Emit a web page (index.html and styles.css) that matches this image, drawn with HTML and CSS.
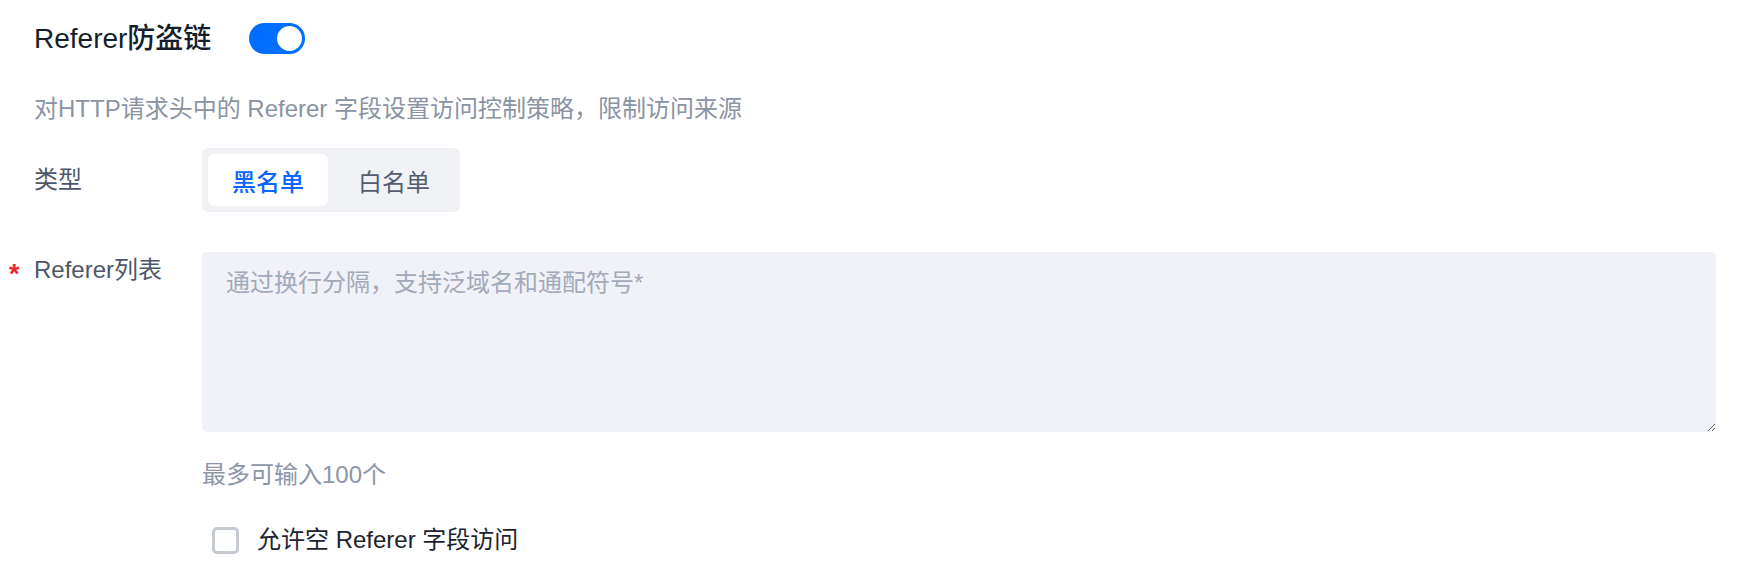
FILE: index.html
```html
<!DOCTYPE html>
<html lang="zh-CN">
<head>
  <meta charset="UTF-8">
  <title>Referer防盗链</title>
  <link rel="stylesheet" href="styles.css">
</head>
<body>

  <div class="panel">
    <div class="panel-head">
      <h2 class="panel-title">Referer防盗链</h2>
      <span class="switch is-on"><span class="switch-knob"></span></span>
    </div>

    <p class="panel-desc">对HTTP请求头中的 Referer 字段设置访问控制策略，限制访问来源</p>

    <div class="form-row row-type">
      <label class="form-label">类型</label>
      <div class="form-control">
        <div class="segment">
          <button class="segment-item is-active">黑名单</button>
          <button class="segment-item">白名单</button>
        </div>
      </div>
    </div>

    <div class="form-row row-list">
      <label class="form-label is-required">Referer列表</label>
      <div class="form-control">
        <textarea class="list-input" placeholder="通过换行分隔，支持泛域名和通配符号*"></textarea>
        <div class="form-hint">最多可输入100个</div>
        <label class="check">
          <span class="check-box"></span>
          <span class="check-text">允许空 Referer 字段访问</span>
        </label>
      </div>
    </div>
  </div>

</body>
</html>
```

FILE: styles.css
```css
body {
margin: 0;
background: #fff;
font-family: "Liberation Sans", "Noto Sans CJK SC", sans-serif;
color: #1d2330;
}

.panel {
padding: 23px 36px 0 34px;
}

.panel-head {
display: flex;
align-items: center;
height: 31px;
}

.panel-title {
margin: 0;
font-size: 28px;
font-weight: 500;
line-height: 31px;
color: #161d2b;
}

.switch {
position: relative;
display: inline-block;
width: 56px;
height: 31px;
margin-left: 38px;
border-radius: 16px;
background: #c9ced8;
}

.switch.is-on {
background: #006eff;
}

.switch-knob {
position: absolute;
top: 3px;
right: 3px;
width: 25px;
height: 25px;
border-radius: 50%;
background: #fff;
}

.panel-desc {
margin: 39px 0 0;
font-size: 24px;
line-height: 32px;
color: #8a93a3;
}

.form-row {
display: flex;
}

.row-type {
margin-top: 23px;
align-items: center;
}

.row-list {
margin-top: 40px;
}

.form-label {
position: relative;
width: 168px;
flex-shrink: 0;
font-size: 24px;
line-height: 36px;
color: #4e5769;
}

/* red star in front of required labels */
.form-label.is-required::before {
content: "*";
position: absolute;
left: -25px;
top: 4px;
font-size: 27px;
color: #f0262d;
font-weight: bold;
}

.form-control {
flex: 1;
}

.segment {
display: inline-flex;
gap: 6px;
padding: 6px;
border-radius: 6px;
background: #f0f2f6;
}

.segment-item {
width: 120px;
height: 52px;
border: none;
border-radius: 6px;
background: transparent;
font-family: inherit;
font-size: 24px;
color: #535d6e;
cursor: pointer;
}

.segment-item.is-active {
background: #fff;
color: #0a66ff;
font-weight: 500;
}

.list-input {
display: block;
box-sizing: border-box;
width: 100%;
height: 180px;
padding: 12px 24px;
border: none;
border-radius: 5px;
background: #f1f2f7;
font-family: inherit;
font-size: 24px;
line-height: 38px;
color: #1d2330;
outline: none;
}

.list-input::placeholder {
color: #a2a9b8;
}

.form-hint {
margin-top: 27px;
font-size: 24px;
line-height: 32px;
color: #8d96a6;
}

.check {
display: flex;
align-items: center;
margin: 33px 0 0 10px;
cursor: pointer;
}

.check-box {
box-sizing: border-box;
width: 27px;
height: 27px;
border: 3px solid #c4c9d2;
border-radius: 5px;
background: #fff;
}

.check-text {
margin-left: 18px;
font-size: 24px;
line-height: 32px;
color: #1d2330;
}
```
